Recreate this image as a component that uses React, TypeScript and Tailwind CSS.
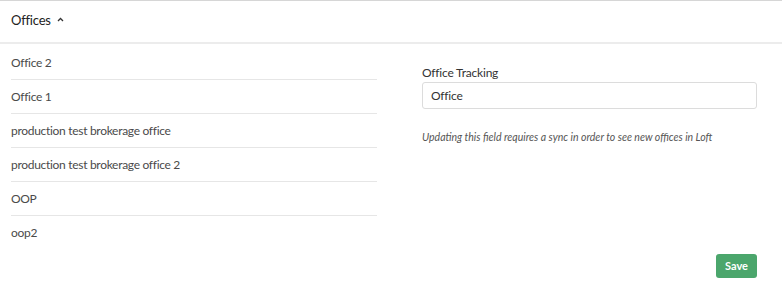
const offices = [
  "Office 2",
  "Office 1",
  "production test brokerage office",
  "production test brokerage office 2",
  "OOP",
  "oop2",
];

const App = () => {
  return (
    <div className="w-[782px] h-[288px] flex flex-col bg-white font-['Lato',sans-serif] border-t border-[#d6d6d6]">
      <div className="h-[43px] shrink-0 flex items-center px-[11px] border-b-2 border-[#ececec]">
        <span className="text-[13px] text-[#222] tracking-[-0.2px] mt-[-2px]">
          Offices
        </span>
        <svg
          className="ml-[6px] mt-[-4px]"
          width="7"
          height="5"
          viewBox="0 0 7 5"
          fill="none"
        >
          <path d="M1 4 L3.5 1.5 L6 4" stroke="#333" strokeWidth="1.3" />
        </svg>
      </div>
      <div className="flex-1 flex pl-[11px] pt-[2px]">
        <ul className="w-[366px]">
          {offices.map((office, i) => (
            <li
              key={office}
              className={
                i < offices.length - 1
                  ? "h-[34px] flex items-center text-[12px] tracking-[-0.3px] text-[#4a4a4a] border-b border-[#e6e6e6]"
                  : "h-[34px] flex items-center text-[12px] tracking-[-0.3px] text-[#4a4a4a]"
              }
            >
              {office}
            </li>
          ))}
        </ul>
        <div className="ml-[45px] w-[335px] flex flex-col">
          <label className="mt-[19px] text-[12px] tracking-[-0.2px] text-[#333] leading-[16px]">
            Office Tracking
          </label>
          <input
            readOnly
            value="Office"
            className="mt-[1px] h-[27px] w-full border border-[#dcdcdc] rounded-[3px] px-[8px] text-[12px] tracking-[-0.2px] text-[#333] outline-none"
          />
          <p className="mt-[21px] text-[10.5px] italic text-[#555]">
            Updating this field requires a sync in order to see new offices in
            Loft
          </p>
          <div className="flex justify-end mt-auto mb-[10px]">
            <button className="w-[41px] h-[24px] rounded-[3px] bg-[#4ba66c] text-white text-[11px] font-bold">
              Save
            </button>
          </div>
        </div>
      </div>
    </div>
  );
};

export default App;
